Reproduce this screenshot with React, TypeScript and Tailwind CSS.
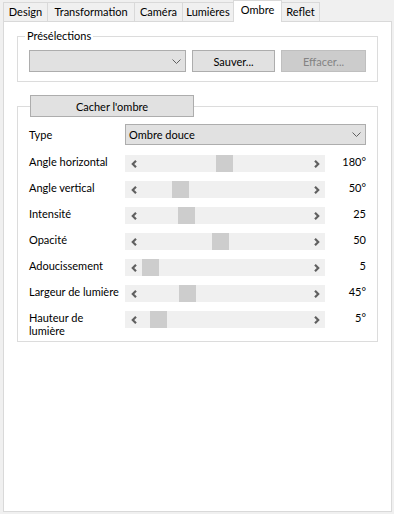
import React from "react";

type Row = { label: React.ReactNode; value: string; pos: number };

const rows: Row[] = [
  { label: "Angle horizontal", value: "180°", pos: 91 },
  { label: "Angle vertical", value: "50°", pos: 47 },
  { label: "Intensité", value: "25", pos: 53 },
  { label: "Opacité", value: "50", pos: 87 },
  { label: "Adoucissement", value: "5", pos: 17 },
  { label: "Largeur de lumière", value: "45°", pos: 54 },
  {
    label: (
      <>
        Hauteur de
        <br />
        lumière
      </>
    ),
    value: "5°",
    pos: 25,
  },
];

const tabs = [
  { name: "Design", w: "w-[45px]" },
  { name: "Transformation", w: "w-[88px]" },
  { name: "Caméra", w: "w-[49px]" },
  { name: "Lumières", w: "w-[52px]" },
  { name: "Ombre", w: "w-[49px]", active: true },
  { name: "Reflet", w: "w-[39px]" },
];

function ChevronDown() {
  return (
    <svg width="9" height="5" viewBox="0 0 9 5" fill="none">
      <path d="M0.5 0.5 L4.5 4.5 L8.5 0.5" stroke="#606060" strokeWidth="1" />
    </svg>
  );
}

function ArrowLeft() {
  return (
    <svg width="6" height="8" viewBox="0 0 6 8" fill="none">
      <path d="M5 0.8 L1.8 4 L5 7.2" stroke="#606060" strokeWidth="2.2" />
    </svg>
  );
}

function ArrowRight() {
  return (
    <svg width="6" height="8" viewBox="0 0 6 8" fill="none">
      <path d="M1 0.8 L4.2 4 L1 7.2" stroke="#606060" strokeWidth="2.2" />
    </svg>
  );
}

function Slider({ pos }: { pos: number }) {
  return (
    <div className="flex h-[17px] w-[200px] shrink-0 bg-[#f0f0f0]">
      <div className="flex w-[17px] items-center justify-center">
        <ArrowLeft />
      </div>
      <div className="flex flex-1">
        <div className="h-[17px] w-[17px] bg-[#cdcdcd]" style={{ marginLeft: pos - 17 }} />
      </div>
      <div className="flex w-[17px] items-center justify-center">
        <ArrowRight />
      </div>
    </div>
  );
}

export default function App() {
  return (
    <div className="flex h-[514px] w-[394px] flex-col bg-[#f0f0f0] font-['Lato','Liberation_Sans',sans-serif] text-[11px] leading-[13px] text-black">
      <div className="relative z-10 flex h-[21px] items-end pl-[3px]">
        {tabs.map((t, i) =>
          t.active ? (
            <div
              key={t.name}
              className={`${t.w} -mb-px -ml-px h-[22px] shrink-0 border-x border-t border-[#d9d9d9] bg-white pt-[2px] text-center`}
            >
              {t.name}
            </div>
          ) : (
            <div
              key={t.name}
              className={`${t.w} ${i === 0 ? "" : "-ml-px"} h-[19px] shrink-0 border-x border-t border-[#d9d9d9] bg-[#f0f0f0] pt-[2px] text-center`}
            >
              {t.name}
            </div>
          )
        )}
      </div>
      <div className="ml-[3px] flex h-[491px] w-[389px] flex-col border border-[#d9d9d9] bg-white px-[13px] pt-[7px]">
        <fieldset className="border border-[#dcdcdc] px-[11px] pb-[9px] pt-[6px]">
          <legend className="-ml-1 px-[2px] pb-[2px] leading-[13px]">Présélections</legend>
          <div className="flex gap-[6px]">
            <div className="flex h-[22px] w-[157px] items-center justify-end border border-[#adadad] bg-[#e1e1e1]">
              <div className="flex w-[17px] items-center justify-center">
                <ChevronDown />
              </div>
            </div>
            <div className="flex h-[22px] w-[83px] items-center justify-center border border-[#adadad] bg-[#e1e1e1]">
              Sauver...
            </div>
            <div className="flex h-[22px] w-[85px] items-center justify-center border border-[#bfbfbf] bg-[#cccccc] text-[#838383]">
              Effacer...
            </div>
          </div>
        </fieldset>

        <fieldset className="mt-[13px] border border-[#dcdcdc] px-[11px] pb-[4px] pt-[7px]">
          <legend className="ml-px">
            <div className="flex h-[22px] w-[164px] items-center justify-center border border-[#adadad] bg-[#e1e1e1]">
              Cacher l'ombre
            </div>
          </legend>
          <div className="flex flex-col">
            <div className="flex h-[21px] items-center">
              <div className="w-[96px]">Type</div>
              <div className="flex h-[21px] w-[241px] items-center justify-between border border-[#adadad] bg-[#e1e1e1] pl-[3px]">
                <span>Ombre douce</span>
                <div className="flex w-[17px] items-center justify-center">
                  <ChevronDown />
                </div>
              </div>
            </div>
            <div className="mt-[10px] flex flex-col gap-[9px]">
              {rows.map((r, i) => (
                <div key={i} className="flex items-start">
                  <div className="w-[96px] shrink-0">{r.label}</div>
                  <Slider pos={r.pos} />
                  <div className="w-[41px] text-right">{r.value}</div>
                </div>
              ))}
            </div>
          </div>
        </fieldset>
      </div>
    </div>
  );
}
